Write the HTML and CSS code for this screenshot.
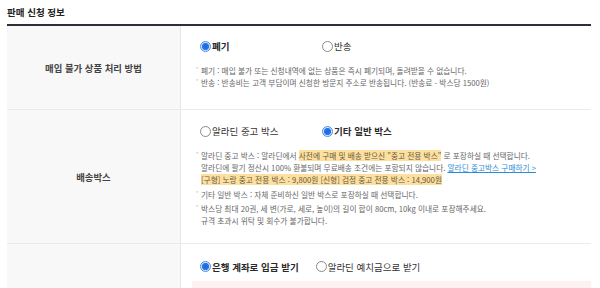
FILE: index.html
```html
<!DOCTYPE html>
<html lang="ko">
<head>
<meta charset="utf-8">
<title>판매 신청 정보</title>
<link rel="stylesheet" href="styles.css">
</head>
<body>
<div class="page">
  <h2 class="title">판매 신청 정보</h2>
  <div class="form-table">
    <div class="row row-dispose">
      <div class="label">매입 불가 상품 처리 방법</div>
      <div class="cell">
        <div class="radios">
          <label class="opt on"><span class="radio"></span>폐기</label>
          <label class="opt"><span class="radio"></span>반송</label>
        </div>
        <ul class="notes">
          <li>폐기 : 매입 불가 또는 신청내역에 없는 상품은 즉시 폐기되며, 돌려받을 수 없습니다.</li>
          <li>반송 : 반송비는 고객 부담이며 신청한 방문지 주소로 반송됩니다. (반송료 - 박스당 1500원)</li>
        </ul>
      </div>
    </div>
    <div class="row row-box">
      <div class="label">배송박스</div>
      <div class="cell">
        <div class="radios">
          <label class="opt"><span class="radio"></span>알라딘 중고 박스</label>
          <label class="opt on"><span class="radio"></span>기타 일반 박스</label>
        </div>
        <ul class="notes spaced">
          <li>알라딘 중고 박스 : 알라딘에서 <span class="hl">사전에 구매 및 배송 받으신 "중고 전용 박스"</span> 로 포장하실 때 선택합니다.<br>알라딘에 팔기 정산시 100% 환불되며 무료배송 조건에는 포함되지 않습니다. <a class="link" href="#">알라딘 중고박스 구매하기 &gt;</a><br><span class="hl">[구형] 노랑 중고 전용 박스 : 9,800원 [신형] 검정 중고 전용 박스 : 14,900원</span></li>
          <li>기타 일반 박스 : 자체 준비하신 일반 박스로 포장하실 때 선택합니다.</li>
          <li>박스당 최대 20권, 세 변(가로, 세로, 높이)의 길이 합이 80cm, 10kg 이내로 포장해주세요.<br>규격 초과시 위탁 및 회수가 불가합니다.</li>
        </ul>
      </div>
    </div>
    <div class="row row-pay">
      <div class="label"></div>
      <div class="cell">
        <div class="radios compact">
          <label class="opt on"><span class="radio"></span>은행 계좌로 입금 받기</label>
          <label class="opt"><span class="radio"></span>알라딘 예치금으로 받기</label>
        </div>
        <div class="pay-box"></div>
      </div>
    </div>
  </div>
</div>
</body>
</html>
```
FILE: styles.css
```css
* { box-sizing: border-box; }
html, body { margin: 0; padding: 0; background: #fff; }
body {
  font-family: "Noto Sans CJK KR", "Noto Sans", sans-serif;
  color: #333;
  overflow: hidden;
}
.page {
  width: 584px;
  margin-left: 7px;
}
.title {
  margin: 0 0 5px;
  padding-top: 6px;
  font-size: 9.5px;
  line-height: 13px;
  font-weight: 700;
  color: #222;
}
.form-table {
  border-top: 2px solid #2e2f3a;
}
.row {
  display: grid;
  grid-template-columns: 174px 1fr;
  border-bottom: 1px solid #ebebeb;
}
.label {
  background: #f8f8f8;
  border-right: 1px solid #e6e6e6;
  display: flex;
  align-items: center;
  justify-content: center;
  font-size: 9.4px;
  font-weight: 700;
  color: #444;
}
.cell {
  padding: 14px 0 21px 15px;
}
.row-box .cell { padding: 15px 0 16px 15px; }
.row-pay .cell { padding: 17px 0 0 15px; }
.radios {
  display: flex;
  margin-left: 4px;
  height: 12px;
  align-items: center;
}
.opt {
  display: flex;
  align-items: center;
  width: 122px;
  font-size: 9.5px;
  line-height: 12px;
  color: #333;
}
.opt.on { font-weight: 700; color: #2a2a2a; }
.radios.compact { gap: 17px; }
.radios.compact .opt { width: auto; }
.radio {
  width: 11px;
  height: 11px;
  border-radius: 50%;
  border: 1px solid #8a8a8a;
  background: #fff;
  margin-right: 1px;
  flex: none;
}
.opt.on .radio {
  border-color: #4d8fe0;
  background: radial-gradient(circle, #1666e0 0, #2a78ea 3.3px, #d3e5fb 3.9px);
}
.notes {
  list-style: none;
  margin: 13px 0 0;
  padding: 0;
  font-size: 7.7px;
  line-height: 11.7px;
  color: #666;
}
.notes li {
  padding-left: 5px;
}
.notes li::before {
  content: "*";
  display: inline-block;
  width: 5px;
  margin-left: -5px;
  color: #b5b5b5;
  font-size: 5px;
  vertical-align: top;
  line-height: 8px;
}
.notes.spaced li + li { margin-top: 3px; }
.hl {
  background: #fde0a0;
  color: #6a5a3a;
}
.link {
  color: #2e8bd6;
  text-decoration: underline;
}
.pay-box {
  margin: 8px 0 0 -4px;
  background: #fdf1f1;
  height: 130px;
}
```
